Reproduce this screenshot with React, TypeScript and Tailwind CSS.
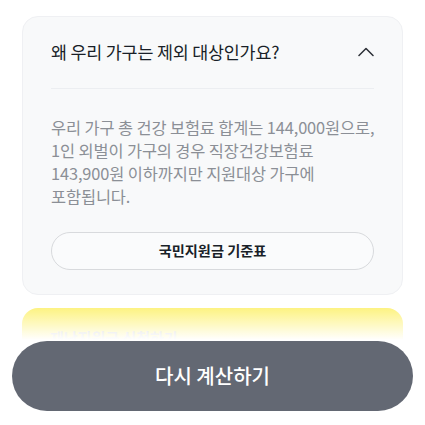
import React from 'react'

const font = { fontFamily: '"Noto Sans CJK KR", "Noto Sans", sans-serif' }

const ChevronUp = () => (
  <svg width="16" height="10" viewBox="0 0 16 10" fill="none">
    <polyline
      points="1,8.5 8,1.5 15,8.5"
      stroke="#2b2f36"
      strokeWidth="1.5"
      strokeLinecap="round"
      strokeLinejoin="round"
    />
  </svg>
)

export default function App() {
  return (
    <div
      className="relative h-[425px] w-[425px] overflow-hidden bg-white px-[22px] pt-4"
      style={font}
    >
      {/* accordion card */}
      <div className="rounded-2xl border border-[#eff0f3] bg-[#f8f9fa] px-[28px] pb-6">
        <div className="flex h-[71px] items-center justify-between">
          <p className="text-[17.4px] tracking-[-0.2px] text-[#191f28]">
            왜 우리 가구는 제외 대상인가요?
          </p>
          <span className="mr-0 mt-[-2px]">
            <ChevronUp />
          </span>
        </div>
        <div className="h-px bg-[#eceef1]" />
        <p className="mt-[27px] whitespace-nowrap text-[16.4px] leading-[23px] tracking-[-0.12px] text-[#8b8f96]">
          우리 가구 총 건강 보험료 합계는 144,000원으로,
          <br />
          1인 외벌이 가구의 경우 직장건강보험료
          <br />
          143,900원 이하까지만 지원대상 가구에
          <br />
          포함됩니다.
        </p>
        <button className="mt-6 flex h-[38px] w-full items-center justify-center rounded-full border border-[#d8dadd] bg-[#fafbfc] text-[14.2px] font-bold text-[#191f28]">
          국민지원금 기준표
        </button>
      </div>

      {/* next card, mostly hidden under the bottom bar */}
      <div className="mt-[13px] h-[120px] rounded-2xl bg-[#fdf27a] px-[28px] pt-[26px]">
        <p className="text-[15px] font-bold leading-[8px] text-[#c4c7cc]">재난지원금 신청하기</p>
      </div>

      {/* bottom cta */}
      <div className="absolute bottom-0 left-0 right-0 bg-[linear-gradient(to_bottom,rgba(255,255,255,0)_0px,#ffffff_34px)] px-3 pb-[14px] pt-[35px]">
        <button className="flex h-[70px] w-full items-center justify-center rounded-full bg-[#636873] text-[20px] font-medium text-white">
          다시 계산하기
        </button>
      </div>
    </div>
  )
}
